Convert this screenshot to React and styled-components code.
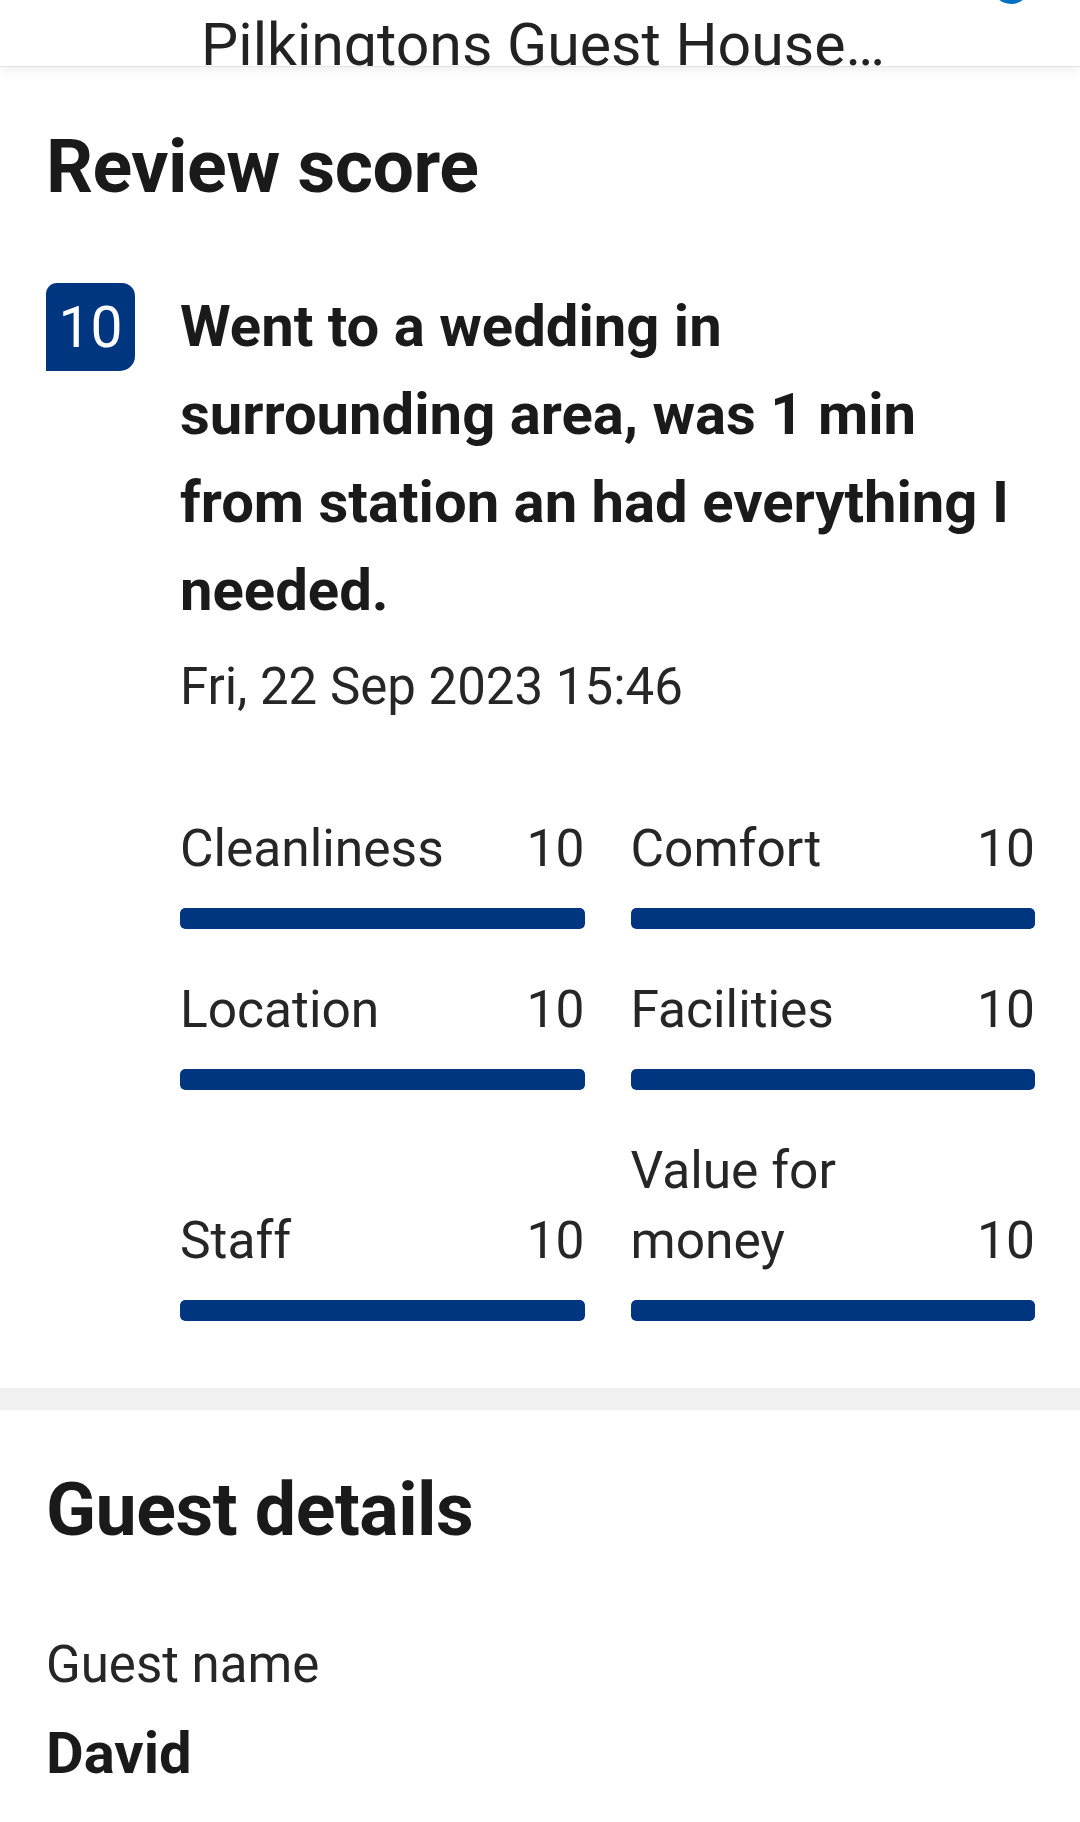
import React from 'react';
import styled, { createGlobalStyle } from 'styled-components';

const GlobalStyles = createGlobalStyle`
  * {
    margin: 0;
    padding: 0;
    box-sizing: border-box;
  }
  body {
    background: #fff;
    font-family: Roboto, "Noto Sans", Arial, sans-serif;
    color: #1a1a1a;
  }
`;

const theme = {
  navy: '#003580',
  text: '#1a1a1a',
  band: '#f0f0f0',
};

const Page = styled.div`
  width: 1080px;
  min-height: 1822px;
  background: #fff;
`;

const Header = styled.header`
  position: relative;
  height: 67px;
  overflow: hidden;
  text-align: center;
  border-bottom: 1px solid #e4e4e4;
  box-shadow: 0 4px 10px rgba(0, 0, 0, 0.06);
`;

const HeaderTitle = styled.h2`
  font-weight: 400;
  font-size: 59px;
  line-height: 67px;
  padding-top: 11px;
  padding-left: 6px;
  color: #222;
  white-space: nowrap;
`;

const Avatar = styled.span`
  position: absolute;
  top: -34px;
  right: 50px;
  width: 38px;
  height: 38px;
  border-radius: 50%;
  background: #0071c2;
`;

const Section = styled.section`
  padding: ${(p) => p.$top}px 45px 0 46px;
`;

const Heading = styled.h1`
  font-weight: 700;
  font-size: 73.5px;
  line-height: 86px;
  letter-spacing: -0.5px;
  color: ${theme.text};
`;

const ReviewRow = styled.div`
  display: flex;
  align-items: flex-start;
  gap: 45px;
  margin-top: 72px;
`;

const Badge = styled.div`
  flex: none;
  width: 89px;
  height: 88px;
  margin-top: 1px;
  display: flex;
  align-items: center;
  justify-content: center;
  background: ${theme.navy};
  color: #fff;
  font-size: 57px;
  font-weight: 400;
  border-radius: 11px 13px 15px 0;
`;

const ReviewBody = styled.div`
  flex: 1;
  min-width: 0;
`;

const ReviewText = styled.p`
  font-weight: 700;
  font-size: 58px;
  line-height: 88px;
  color: ${theme.text};
`;

const DateLine = styled.div`
  margin-top: 22px;
  font-size: 51px;
  line-height: 62px;
  color: #262626;
`;

const ScoreGrid = styled.div`
  display: grid;
  grid-template-columns: 1fr 1fr;
  column-gap: 46px;
  row-gap: 46px;
  margin-top: 96px;
`;

const ScoreItem = styled.div`
  display: flex;
  flex-direction: column;
  justify-content: flex-end;
`;

const ScoreHead = styled.div`
  display: flex;
  align-items: flex-end;
  justify-content: space-between;
  gap: 20px;
  font-size: 51.5px;
  line-height: 70px;
  color: #262626;
`;

const ScoreLabel = styled.span`
  flex: 1;
  min-width: 0;
`;

const ScoreValue = styled.span`
  flex: none;
`;

const Track = styled.div`
  margin-top: 24px;
  height: 21px;
  border-radius: 5px;
  background: #d9e3f0;
  overflow: hidden;
`;

const Fill = styled.div`
  height: 100%;
  border-radius: 5px;
  background: ${theme.navy};
`;

const Band = styled.div`
  height: 22px;
  margin-top: 67px;
  background: ${theme.band};
`;

const FieldLabel = styled.div`
  margin-top: 81px;
  font-size: 51px;
  line-height: 62px;
  color: #262626;
`;

const FieldValue = styled.div`
  margin-top: 22px;
  font-size: 58px;
  font-weight: 700;
  line-height: 70px;
  color: ${theme.text};
`;

const scores = [
  { label: 'Cleanliness', value: 10 },
  { label: 'Comfort', value: 10 },
  { label: 'Location', value: 10 },
  { label: 'Facilities', value: 10 },
  { label: 'Staff', value: 10 },
  { label: 'Value for money', value: 10 },
];

const App = () => (
  <Page>
    <GlobalStyles />
    <Header>
      <Avatar />
      <HeaderTitle>Pilkingtons Guest House…</HeaderTitle>
    </Header>

    <Section $top={57}>
      <Heading>Review score</Heading>
      <ReviewRow>
        <Badge>10</Badge>
        <ReviewBody>
          <ReviewText>
            Went to a wedding in surrounding area, was 1 min from station an had everything I needed.
          </ReviewText>
          <DateLine>Fri, 22 Sep 2023 15:46</DateLine>
          <ScoreGrid>
            {scores.map((s) => (
              <ScoreItem key={s.label}>
                <ScoreHead>
                  <ScoreLabel>{s.label}</ScoreLabel>
                  <ScoreValue>{s.value}</ScoreValue>
                </ScoreHead>
                <Track>
                  <Fill style={{ width: `${s.value * 10}%` }} />
                </Track>
              </ScoreItem>
            ))}
          </ScoreGrid>
        </ReviewBody>
      </ReviewRow>
    </Section>

    <Band />

    <Section $top={57}>
      <Heading>Guest details</Heading>
      <FieldLabel>Guest name</FieldLabel>
      <FieldValue>David</FieldValue>
    </Section>
  </Page>
);

export default App;
